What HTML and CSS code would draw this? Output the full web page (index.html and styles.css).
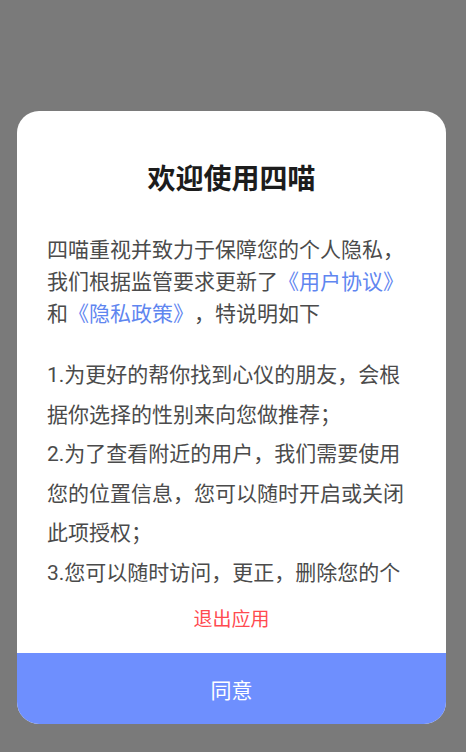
FILE: index.html
```html
<!DOCTYPE html>
<html lang="zh-CN">
<head>
<meta charset="utf-8">
<title>欢迎使用四喵</title>
<link rel="stylesheet" href="styles.css">
</head>
<body>
<div class="dialog">
  <h1 class="title">欢迎使用四喵</h1>
  <div class="content">
    <p class="intro">四喵重视并致力于保障您的个人隐私，我们根据监管要求更新了<a class="link">《用户协议》</a>和<a class="link">《隐私政策》</a>，特说明如下</p>
    <p class="item">1.为更好的帮你找到心仪的朋友，会根据你选择的性别来向您做推荐；</p>
    <p class="item">2.为了查看附近的用户，我们需要使用您的位置信息，您可以随时开启或关闭此项授权；</p>
    <p class="item">3.您可以随时访问，更正，删除您的个人信息，我们也提供账户注销的渠道。</p>
  </div>
  <div class="exit">退出应用</div>
  <div class="agree">同意</div>
</div>
</body>
</html>
```
FILE: styles.css
```css
html, body {
  margin: 0;
  padding: 0;
  height: 100%;
}
body {
  background: #7a7a7a;
  font-family: Roboto, "Noto Sans CJK SC", sans-serif;
  padding-top: 111px;
  box-sizing: border-box;
  text-spacing-trim: space-all;
}
.dialog {
  margin-left: 17px;
  width: 429px;
  height: 613px;
  background: #ffffff;
  border-radius: 22px;
  overflow: hidden;
  display: flex;
  flex-direction: column;
}
.title {
  margin: 0;
  padding-top: 48px;
  font-size: 28px;
  line-height: 42px;
  font-weight: bold;
  color: #1c1c1c;
  text-align: center;
  flex: none;
}
.content {
  margin-top: 33px;
  height: 358px;
  overflow: hidden;
  padding: 0 30px;
  color: #4b4b4b;
  font-size: 21px;
  flex: none;
}
.intro {
  margin: 0 0 26px;
  line-height: 32px;
}
.link {
  color: #5f86f0;
  text-decoration: none;
}
.item {
  margin: 0;
  line-height: 39.5px;
}
.exit {
  flex: none;
  height: 52px;
  line-height: 56px;
  text-align: center;
  color: #ff4a4f;
  font-size: 19px;
}
.agree {
  margin-top: auto;
  flex: none;
  height: 71px;
  line-height: 76px;
  background: #6e8ffe;
  color: #ffffff;
  text-align: center;
  font-size: 21px;
}
```
